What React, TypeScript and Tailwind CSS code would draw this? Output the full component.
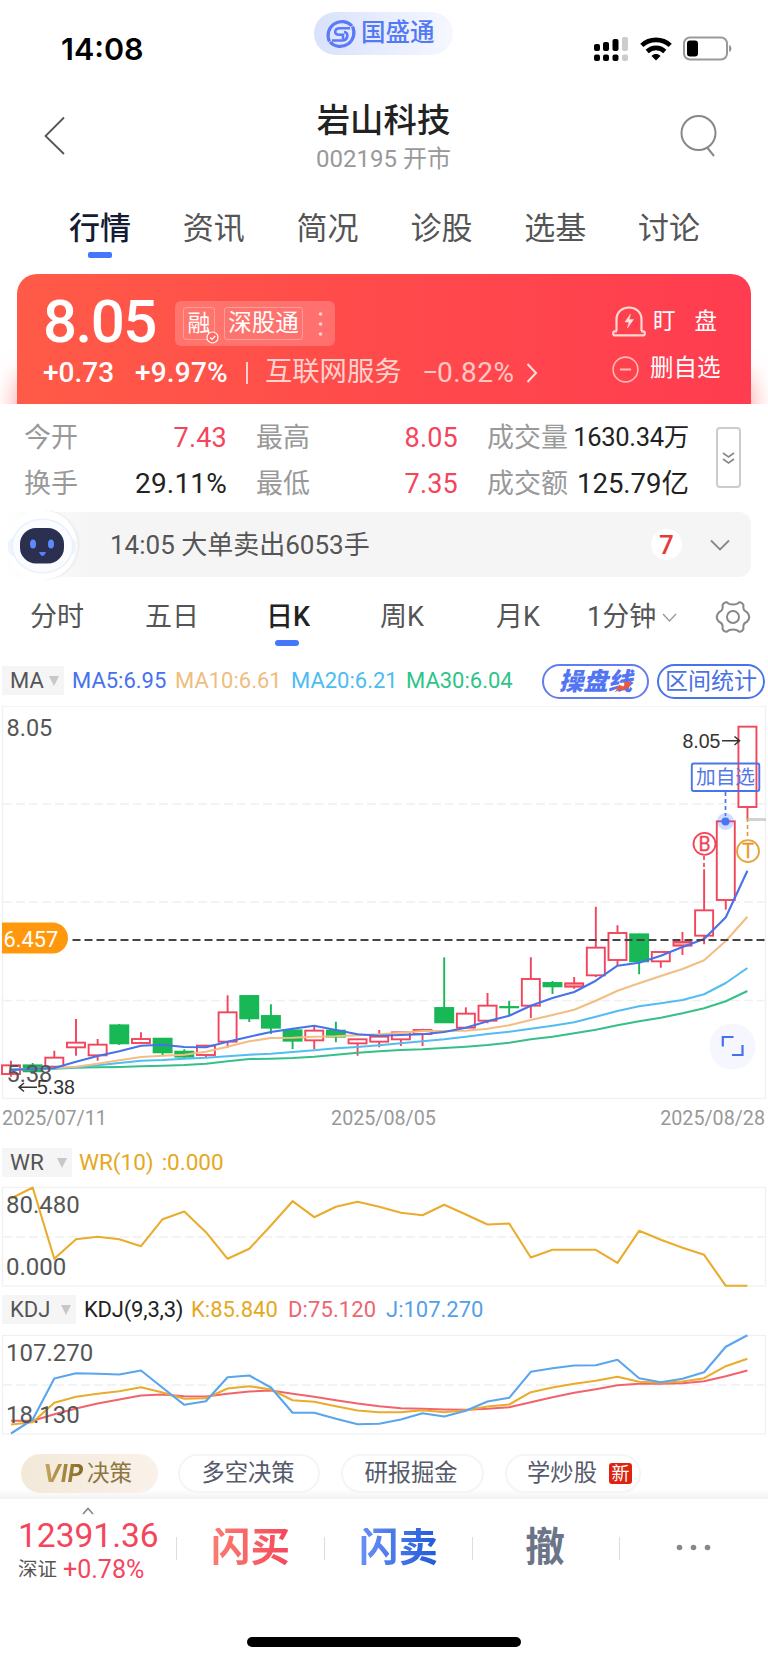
import type { ReactNode } from 'react';

const STEP = 21.66;
const cx = (i: number) => 11 + STEP * i;

// series are kept at 3x of the drawn height: [high, top, bottom, low, up]
const candles: [number, number, number, number, number][] = [
  [1082, 1096, 1122, 1130, 1],
  [1089, 1096, 1114, 1116, 0],
  [1052, 1073, 1100, 1108, 1],
  [957, 1028, 1042, 1067, 1],
  [1017, 1034, 1066, 1082, 1],
  [972, 976, 1030, 1035, 0],
  [997, 1017, 1029, 1029, 1],
  [1014, 1016, 1057, 1066, 0],
  [1048, 1055, 1070, 1077, 0],
  [1035, 1037, 1065, 1074, 1],
  [886, 937, 1025, 1043, 1],
  [885, 888, 955, 966, 0],
  [913, 948, 983, 1002, 0],
  [984, 991, 1022, 1047, 0],
  [980, 992, 1021, 1047, 1],
  [965, 992, 1010, 1027, 0],
  [1016, 1018, 1030, 1067, 1],
  [990, 1010, 1025, 1042, 1],
  [996, 997, 1018, 1038, 1],
  [986, 990, 1002, 1038, 1],
  [772, 924, 967, 967, 0],
  [922, 941, 983, 983, 1],
  [879, 917, 962, 970, 1],
  [902, 921, 922, 946, 0],
  [772, 837, 917, 954, 1],
  [843, 849, 859, 882, 0],
  [831, 850, 860, 866, 1],
  [620, 743, 826, 831, 1],
  [676, 699, 780, 797, 1],
  [701, 703, 784, 823, 0],
  [753, 756, 784, 803, 1],
  [696, 726, 737, 765, 1],
  [508, 631, 707, 733, 1],
  [364, 364, 600, 629, 1],
  [80, 80, 321, 358, 1],
];

const ma5 = [1110, 1107, 1104, 1085, 1068, 1054, 1037, 1034, 1041, 1042, 1025, 1010, 996, 986, 977, 990, 1003, 1007, 1005, 1003, 996, 983, 964, 947, 917, 894, 876, 842, 797, 788, 767, 741, 717, 652, 512];
const ma10 = [1109, 1107, 1104, 1100, 1091, 1081, 1071, 1067, 1064, 1055, 1040, 1024, 1014, 1013, 1010, 1009, 1006, 1003, 998, 993, 993, 992, 986, 976, 960, 945, 929, 902, 872, 850, 828, 807, 781, 723, 650];
const ma20 = [1108, 1107, 1105, 1102, 1096, 1089, 1082, 1080, 1076, 1073, 1069, 1064, 1061, 1056, 1051, 1045, 1041, 1036, 1030, 1024, 1018, 1010, 1002, 995, 986, 977, 967, 950, 933, 919, 910, 900, 883, 849, 804];
const ma30 = [1108, 1107, 1106, 1103, 1102, 1101, 1099, 1097, 1095, 1091, 1084, 1077, 1076, 1074, 1070, 1064, 1058, 1054, 1050, 1048, 1044, 1040, 1035, 1028, 1018, 1010, 1000, 989, 976, 964, 953, 940, 925, 904, 873];
const wr = [174, 141, 355, 296, 289, 296, 317, 236, 213, 275, 355, 325, 255, 182, 230, 199, 184, 199, 217, 224, 193, 222, 252, 249, 351, 328, 328, 328, 367, 271, 298, 322, 343, 436, 436];
const kLine = [853, 846, 788, 770, 761, 753, 741, 757, 776, 774, 745, 738, 748, 780, 785, 798, 811, 816, 816, 810, 816, 810, 799, 793, 756, 742, 731, 722, 710, 725, 728, 724, 714, 678, 656];
const dLine = [842, 842, 822, 805, 790, 778, 766, 763, 768, 769, 761, 754, 751, 761, 770, 780, 790, 798, 804, 806, 808, 809, 806, 801, 786, 771, 758, 747, 735, 731, 731, 729, 723, 708, 691];
const jLine = [880, 838, 715, 699, 701, 703, 691, 743, 794, 783, 711, 706, 742, 818, 818, 836, 852, 851, 838, 819, 829, 812, 784, 773, 695, 684, 676, 675, 659, 714, 726, 716, 696, 620, 585];

function Line({ data, color, base = 0 }: { data: number[]; color: string; base?: number }) {
  const points = data.map((v, i) => `${cx(i).toFixed(1)},${((v - base) / 3).toFixed(1)}`).join(' ');
  return <polyline points={points} fill="none" stroke={color} strokeWidth="2.1" strokeLinejoin="round" />;
}

function StatusBar() {
  return (
    <div className="flex h-[92px] items-start justify-between pl-[61px] pr-[36px]">
      <div className="mt-[34px] w-[253px] font-[Inter] text-[30.5px] leading-[30px] font-semibold">14:08</div>
      <div className="mt-3 flex h-[43px] w-[139px] items-center gap-[4px] rounded-full bg-linear-to-r from-[#d9e2fc] to-[#f6f8ff] pl-[11px]">
        <svg width="32" height="32" viewBox="0 0 32 32" fill="none" stroke="#5b7af5">
          <path d="M27 8A13.800 13.800 0 0 0 4.500 23.500" strokeWidth="3.200" />
          <path d="M5 24A13.800 13.800 0 0 0 27.500 8.500" strokeWidth="3.200" />
          <path d="M25 10.300H15C9 10.300 8.500 16.800 14 16.800H18V21" strokeWidth="2.600" />
          <path d="M7 22.500H17C23.500 22.500 24 14 19 14" strokeWidth="2.600" />
        </svg>
        <span className="text-[24.500px] leading-none font-medium text-[#5479f5]">国盛通</span>
      </div>
      <div className="mt-[36px] flex w-[279px] items-center justify-end gap-[11px]">
        <svg width="35" height="25" viewBox="0 0 35 25">
          <rect x="0" y="8" width="6" height="7" rx="2" />
          <rect x="9" y="6" width="6" height="9" rx="2" />
          <rect x="18.500" y="3" width="6" height="12" rx="2" />
          <rect x="28" y="1" width="6" height="14" rx="2" fill="#ccc" />
          <rect x="0" y="18.500" width="6" height="6.500" rx="2" />
          <rect x="9" y="18.500" width="6" height="6.500" rx="2" />
          <rect x="18.500" y="18.500" width="6" height="6.500" rx="2" />
          <rect x="28" y="18.500" width="6" height="6.500" rx="2" fill="#ccc" />
        </svg>
        <svg width="32" height="24" viewBox="0 0 32 24" fill="none" stroke="#000" strokeWidth="4.600">
          <path d="M1.800 8.300C9.500 1 22.500 1 30.200 8.300" />
          <path d="M7.200 14.500C12.200 9.700 19.800 9.700 24.800 14.500" />
          <path d="M11.500 19C14.200 16.400 17.800 16.400 20.500 19L16 23.500Z" fill="#000" stroke="none" />
        </svg>
        <svg width="49" height="25" viewBox="0 0 49 25">
          <rect x="1" y="1.500" width="43" height="22" rx="6" fill="none" stroke="#999" strokeWidth="2" />
          <rect x="4" y="4.500" width="11" height="16" rx="3" />
          <path d="M46.200 9C49 10 49 15 46.200 16Z" fill="#888" />
        </svg>
      </div>
    </div>
  );
}

function Header() {
  return (
    <div className="flex h-[96px] justify-between pl-[44px] pr-[50px]">
      <svg className="mt-[24px]" width="22" height="40" viewBox="0 0 22 40" fill="none" stroke="#555" strokeWidth="1.800">
        <path d="M20 1.500L1.500 20L20 38" />
      </svg>
      <div className="ml-[21px] flex w-[200px] flex-col items-center">
        <h1 className="mt-[12px] text-[33.4px] leading-[34px] font-medium text-[#222]">岩山科技</h1>
        <p className="mt-[9px] text-[24px] leading-[24px] text-[#999]">002195 开市</p>
      </div>
      <svg className="mt-[22px]" width="38" height="44" viewBox="0 0 38 44" fill="none" stroke="#888" strokeWidth="2">
        <circle cx="18.500" cy="19" r="17" />
        <path d="M27.500 34L34 42" />
      </svg>
    </div>
  );
}

function MainTabs() {
  return (
    <div className="grid h-[86px] grid-cols-6 pl-[43px] pr-[42px] text-[31px] leading-[34px] text-[#555]">
      {['行情', '资讯', '简况', '诊股', '选基', '讨论'].map((t, i) => (
        <div key={t} className={i === 0 ? 'flex flex-col items-center pt-[24px] font-medium text-[#141c33]' : 'flex flex-col items-center pt-[24px]'}>
          <span>{t}</span>
          {i === 0 && <i className="mt-[6px] h-[6px] w-6 rounded-[2px] bg-[#4477fb]" />}
        </div>
      ))}
    </div>
  );
}

function PriceCard() {
  return (
    <div className="h-[130px] overflow-hidden px-[17px]">
      <div className="flex h-full justify-between rounded-t-[20px] bg-linear-to-r from-[#ff5a47] via-[#ff4a4b] to-[#ff3c50] pl-[26px] pr-[30px] text-white shadow-[0_100px_26px_rgba(255,80,80,0.6)]">
        <div>
          <div className="flex h-[78px] pt-[17px]">
            <span className="mt-[1px] w-[132px] text-[60px] leading-[60px] font-medium tracking-[-1.500px]">8.05</span>
            <div className="mt-[10px] flex h-[45px] w-[160px] items-center rounded-md bg-white/20 pl-[8px]">
              <span className="relative flex h-[33px] w-[32px] items-center justify-center rounded-[3px] border border-white/30 text-[23px] leading-none">
                融
                <svg className="absolute -right-[5px] -bottom-[5px]" width="13" height="13" viewBox="0 0 13 13" fill="#ff6a5f" stroke="#fff" strokeWidth="1.200">
                  <circle cx="6.500" cy="6.500" r="5.500" />
                  <path d="M4 6.500L6 8.500L9.200 5" fill="none" />
                </svg>
              </span>
              <span className="ml-[9px] flex h-[33px] w-[79px] items-center justify-center rounded-[3px] border border-white/30 text-[23.500px] leading-none">深股通</span>
              <svg className="ml-[15px]" width="5" height="36" viewBox="0 0 5 36" fill="#fff" opacity="0.7">
                <circle cx="2.500" cy="8" r="1.800" />
                <circle cx="2.500" cy="18" r="1.800" />
                <circle cx="2.500" cy="28" r="1.800" />
              </svg>
            </div>
          </div>
          <div className="mt-[7px] flex h-[28px] items-center text-[28px] leading-none">
            <span className="w-[92px] font-medium">+0.73</span>
            <span className="w-[111px] font-medium tracking-[0.2px]">+9.97%</span>
            <i className="mr-[17px] h-[22px] w-[2px] bg-white/70" />
            <span className="w-[157px] text-[27.3px] text-[#ffd2cd]">互联网服务</span>
            <span className="flex w-[104px] tracking-[0.5px] text-[#ffc8c4]"><span className="w-[15px]">−</span>0.82%</span>
            <svg width="12" height="22" viewBox="0 0 12 22" fill="none" stroke="#ffe0dd" strokeWidth="2">
              <path d="M1.500 2L10 11L1.500 20" />
            </svg>
          </div>
        </div>
        <div className="w-[109px] pt-[32px]">
          <div className="flex h-[31px] items-center">
            <svg width="34" height="31" viewBox="0 0 34 31" fill="none" stroke="#ffd8d4" strokeWidth="2.200">
              <path d="M4.500 25V13.500C4.500 -2.500 29.500 -2.500 29.500 13.500V25" />
              <path d="M5 25.300H2.500Q1.200 25.300 1.200 27.300T2.500 29.300H31.500Q32.800 29.300 32.800 27.300T31.500 25.300H29" />
              <path d="M18.500 8L13 16H17L15.500 22L21.500 13.500H17.200Z" fill="#ffe3e0" strokeWidth="0.500" />
            </svg>
            <span className="ml-[7px] flex w-[64px] justify-between text-[22.500px] leading-none"><b className="font-normal">盯</b><b className="font-normal">盘</b></span>
          </div>
          <div className="mt-[18px] flex h-[28px] items-center">
            <svg width="27" height="27" viewBox="0 0 27 27" fill="none" stroke="#ffbab8" strokeWidth="1.600">
              <circle cx="13.500" cy="13.500" r="12.400" />
              <path d="M8 13.500H19" strokeWidth="2" />
            </svg>
            <span className="ml-[11px] text-[23.5px] leading-none whitespace-nowrap">删自选</span>
          </div>
        </div>
      </div>
    </div>
  );
}

function Stats() {
  return (
    <div className="flex h-[108px] pl-[24px]">
      <div className="grid h-[104px] w-[665px] grid-cols-[54px_149px_29px_54px_148px_29px_202px] grid-rows-[46px_46px] items-center pt-[11px] text-[27px] leading-none text-[#222]">
        <span className="text-[#999]">今开</span>
        <span className="text-right tracking-[0.2px] text-[#f5455c]">7.43</span>
        <i />
        <span className="text-[#999]">最高</span>
        <span className="text-right tracking-[0.2px] text-[#f5455c]">8.05</span>
        <i />
        <div className="flex items-center justify-between whitespace-nowrap">
          <span className="text-[#999]">成交量</span>
          <span className="text-[25.500px] tracking-[-0.3px]">1630.34万</span>
        </div>
        <span className="text-[#999]">换手</span>
        <span className="text-right text-[28px] tracking-[0.2px]">29.11%</span>
        <i />
        <span className="text-[#999]">最低</span>
        <span className="text-right tracking-[0.2px] text-[#f5455c]">7.35</span>
        <i />
        <div className="flex items-center justify-between whitespace-nowrap">
          <span className="text-[#999]">成交额</span>
          <span className="text-[27.500px]">125.79亿</span>
        </div>
      </div>
      <div className="mt-[23px] ml-[27px] flex h-[61px] w-[25px] items-center justify-center rounded-[4px] border-2 border-[#ccc]">
        <svg width="13" height="14" viewBox="0 0 13 14" fill="none" stroke="#888" strokeWidth="1.600">
          <path d="M1 2L6.500 6L12 2" />
          <path d="M1 8L6.500 12L12 8" />
        </svg>
      </div>
    </div>
  );
}

function Notice() {
  return (
    <div className="mr-[17px] flex h-[65px] items-center rounded-r-xl bg-linear-to-r from-white to-[#f5f5f5] to-12% pl-[5px] text-[26px] leading-none text-[#555]">
      <svg width="76" height="70" viewBox="0 0 76 70" className="-my-1">
        <circle cx="40" cy="35" r="35" fill="#f0f0f2" />
        <circle cx="37" cy="35" r="35" fill="#fff" />
        <rect x="3" y="27" width="68" height="19" rx="7" fill="#eef4fe" />
        <ellipse cx="37.500" cy="36" rx="31" ry="27.500" fill="#e9f1fe" />
        <ellipse cx="37.500" cy="36" rx="29.500" ry="26" fill="#fafcff" />
        <rect x="15" y="18" width="44" height="35.500" rx="16" fill="#2b3050" />
        <ellipse cx="28" cy="34" rx="3" ry="4.500" fill="#5b8bff" />
        <ellipse cx="46" cy="34" rx="3" ry="4.500" fill="#5b8bff" />
        <path d="M34 42H41Q37.500 50 34 42Z" fill="#5b7df5" />
      </svg>
      <span className="ml-[29px]">14:05 大单卖出6053手</span>
      <span className="ml-auto flex h-[31px] w-[31px] items-center justify-center rounded-full bg-white font-medium text-[#e83a3a]">7</span>
      <svg className="mr-[21px] ml-[28px]" width="20" height="12" viewBox="0 0 20 12" fill="none" stroke="#888" strokeWidth="1.800">
        <path d="M1 1.500L10 10.500L19 1.500" />
      </svg>
    </div>
  );
}

function PeriodTabs() {
  return (
    <div className="flex h-[89px] items-start pt-[25px] pl-[30px] text-[27px] leading-[30px] text-[#555]">
      <span className="w-[115px]">分时</span>
      <span className="w-[121px]">五日</span>
      <span className="flex w-[114px] flex-col font-medium text-[#222]">
        日K
        <i className="mt-[8px] ml-[9px] h-[6px] w-6 rounded-full bg-[#4477fb]" />
      </span>
      <span className="w-[116px]">周K</span>
      <span className="w-[91px]">月K</span>
      <span className="w-[75px] whitespace-nowrap">1分钟</span>
      <svg className="mt-[11px]" width="15" height="10" viewBox="0 0 15 10" fill="none" stroke="#999" strokeWidth="1.400">
        <path d="M1 1L7.500 8L14 1" />
      </svg>
      <svg className="-mt-[2px] ml-[38px]" width="36" height="34" viewBox="0 0 36 34" fill="none" stroke="#888" strokeWidth="2">
        <path d="M12 2.300Q13.500 4.600 18 4.600T24 2.300Q27 2 28.500 5.200Q27.500 10.500 32 12.200Q36.500 17 32 21.800Q27.500 23.500 28.500 28.800Q27 32 24 31.700Q22.500 29.400 18 29.400T12 31.700Q9 32 7.500 28.800Q8.500 23.500 4 21.800Q-0.500 17 4 12.200Q8.500 10.500 7.500 5.200Q9 2 12 2.300Z" strokeLinejoin="round" />
        <circle cx="18" cy="17" r="6" />
      </svg>
    </div>
  );
}

function Chip({ children, className }: { children: ReactNode; className: string }) {
  return (
    <div className={`flex h-[29px] items-center justify-between bg-[#f5f5f6] pr-[5px] pl-[8px] text-[#555] ${className}`}>
      <span>{children}</span>
      <svg width="10" height="10" viewBox="0 0 11 11" fill="#c8c8c8"><path d="M0 0H11L5.500 11Z" /></svg>
    </div>
  );
}

function MaRow() {
  return (
    <div className="flex h-[40px] items-start pl-[2px] text-[22px] leading-none">
      <Chip className="w-[62px]">MA</Chip>
      <div className="flex h-[29px] items-center pl-[8px]">
        <span className="w-[103px] text-[#4671ee]">MA5:6.95</span>
        <span className="w-[116px] text-[#efbd7f]">MA10:6.61</span>
        <span className="w-[115px] text-[#4dbcf0]">MA20:6.21</span>
        <span className="w-[136px] text-[#2ec489]">MA30:6.04</span>
      </div>
      <div className="-mt-[2px] flex h-[35px] w-[107px] items-center justify-center rounded-full border-2 border-[#637cf2]">
        <span className="relative text-[24.500px] leading-[30px] font-black text-[#5275f4] italic">
          操盘线
          <svg className="absolute right-0 bottom-[4px]" width="18" height="12" viewBox="0 0 19 14" fill="#f4533c">
            <path d="M0 13L5 4.500L10 6.500L12 3.500L9.500 2L19 0L16 9.500L14.500 6.500L11 11.500L6.500 9.500Z" />
          </svg>
        </span>
      </div>
      <div className="-mt-[2px] ml-[8px] flex h-[35px] w-[108px] items-center justify-center rounded-full border-2 border-[#4873ea] text-[23px] whitespace-nowrap text-[#4a70e6]">区间统计</div>
    </div>
  );
}

function KChart() {
  return (
    <svg className="block" width="768" height="394" viewBox="0 6 768 394" fontFamily="Roboto, 'Noto Sans CJK SC', sans-serif">
      <rect x="2.500" y="6" width="763" height="392.500" fill="none" stroke="#f0f1f4" strokeWidth="1.500" />
      {[104, 202, 300.5].map((y) => (
        <path key={y} d={`M3 ${y}H765`} stroke="#f0f0f0" strokeWidth="1.300" strokeDasharray="9 4" />
      ))}
      {candles.map(([h, t, b, l, up], i) => (
        <g key={i} stroke={up ? '#f2455b' : '#17b855'} strokeWidth="1.900">
          <path d={`M${cx(i)} ${h / 3}V${t / 3}M${cx(i)} ${b / 3}V${l / 3}`} />
          <rect x={cx(i) - 9} y={t / 3} width="18" height={(b - t) / 3} fill={up ? (b - t < 12 ? '#f9a0a8' : '#fff') : '#17b855'} />
        </g>
      ))}
      <Line data={ma30} color="#35c08a" />
      <Line data={ma20} color="#52bdf0" />
      <Line data={ma10} color="#f3be83" />
      <Line data={ma5} color="#4672ea" />
      <path d="M72.500 240H766" stroke="#444" strokeWidth="2.200" strokeDasharray="8 4" />
      <path d="M2 222.500H52.500A15.500 15.500 0 0 1 52.500 253.500H2Z" fill="#ff980c" />
      <text x="3.500" y="247" fontSize="21.800" fill="#fff">6.457</text>
      <g fill="#555" fontSize="23.500">
        <text x="6.500" y="36">8.05</text>
        <text x="6.500" y="382">5.38</text>
      </g>
      <g fill="#333" fontSize="19.500" fontFamily="'Liberation Sans', sans-serif">
        <text x="37" y="394">5.38</text>
        <text x="682.500" y="48">8.05</text>
      </g>
      <g fill="none" stroke="#333" strokeWidth="1.500">
        <path d="M37 387.300H19M24 383L19 387.300L24 391.500" />
        <path d="M722 40.700H739M734.500 36.500L739.500 40.700L734.500 45" />
      </g>
      <rect x="691.800" y="63.500" width="67.500" height="27.500" rx="2" fill="none" stroke="#4876e8" strokeWidth="1.900" />
      <text x="696" y="84" fontSize="19.700" fill="#5279e4">加自选</text>
      <path d="M725.500 92V116" stroke="#4876e8" strokeWidth="1.700" strokeDasharray="4 3" />
      <circle cx="725.500" cy="121.500" r="8.500" fill="#4477fb" fillOpacity="0.25" />
      <circle cx="725.500" cy="121.500" r="4" fill="#4477fb" />
      <path d="M747.500 119.500H766" stroke="#d2d2d2" strokeWidth="3" />
      <path d="M747.500 118V138" stroke="#d99a38" strokeWidth="1.600" strokeDasharray="4 3" />
      <path d="M704 156V168" stroke="#f2455b" strokeWidth="1.700" strokeDasharray="4 3" />
      <g strokeWidth="1.800" fontSize="19.500" textAnchor="middle">
        <circle cx="704.500" cy="143.800" r="11" fill="#fff" stroke="#f2455b" />
        <text x="704.700" y="150.800" fill="#f2455b" stroke="#f2455b" strokeWidth="0.300">B</text>
        <circle cx="748" cy="151.200" r="11" fill="#fff" stroke="#e8a33a" />
        <text x="748" y="158.200" fill="#e8982a" stroke="#e8982a" strokeWidth="0.300">T</text>
      </g>
      <circle cx="732.500" cy="346.500" r="23" fill="#f5f6fe" />
      <path d="M722.800 346.500V337H733.500M732 355H742.500V345" fill="none" stroke="#4671ee" strokeWidth="2.200" />
    </svg>
  );
}

// shared frame of the WR and KDJ panels
function Panel({ max, min, children }: { max: string; min: string; children: ReactNode }) {
  return (
    <svg className="block" width="768" height="100" viewBox="0 -0.500 768 100" overflow="visible" fontFamily="Roboto, sans-serif">
      <rect x="2.500" y="0" width="763" height="98.500" fill="none" stroke="#eff1f3" strokeWidth="1.300" />
      <path d="M3 49.500H765" stroke="#f0f0f0" strokeWidth="1.300" strokeDasharray="9 4" />
      {children}
      <g fill="#555" fontSize="24">
        <text x="6" y="25">{max}</text>
        <text x="6" y="87.500">{min}</text>
      </g>
    </svg>
  );
}

function Pills() {
  const pill = 'flex h-[39px] items-center justify-center rounded-full border-2 border-[#f5f5f6] bg-white';
  return (
    <div className="flex h-[64px] items-start bg-linear-to-b from-white from-85% to-[#f2f2f2] pt-[19px] pl-[21px] text-[23.3px] leading-none text-[#555a6b]">
      <div className="flex h-[39px] w-[137px] items-center justify-center gap-[2px] rounded-full bg-linear-to-r from-[#f3e9d9] to-[#faf1ea] pr-[4px] text-[#8d7640]">
        <b className="bg-linear-to-r from-[#c9a85f] to-[#846621] bg-clip-text pr-[2px] font-[Inter] text-[24px] text-transparent italic">VIP</b>
        <span className="text-[22.500px]">决策</span>
      </div>
      <div className={`${pill} ml-[20px] w-[142px] pr-[2px]`}>多空决策</div>
      <div className={`${pill} ml-[21px] w-[143px] pr-[3px]`}>研报掘金</div>
      <div className={`${pill} ml-[21px] w-[136px] gap-[12px] pl-[13px]`}>
        <span className="whitespace-nowrap">学炒股</span>
        <span className="flex h-[21px] w-[23px] items-center justify-center rounded-[3px] bg-[#dc2410] text-[18px] text-white">新</span>
      </div>
    </div>
  );
}

function BottomBar() {
  const divider = <i className="mt-[38px] h-[23px] w-px bg-[#ddd]" />;
  return (
    <div className="flex h-[138px] bg-white pl-[18px]">
      <div className="w-[158px]">
        <svg className="mt-[8px] ml-[64px] block" width="12" height="8" viewBox="0 0 12 8" fill="none" stroke="#888" strokeWidth="1.700">
          <path d="M1 7L6 1.500L11 7" />
        </svg>
        <p className="mt-[4px] text-[33.5px] leading-[33px] text-[#f5455c]">12391.36</p>
        <p className="mt-[5px] flex items-center gap-[6px] text-[19.500px] leading-[25px] text-[#555]">深证<span className="text-[25px] text-[#f5455c]">+0.78%</span></p>
      </div>
      {divider}
      <div className="flex w-[147px] justify-center pt-[29px] text-[39.500px] leading-[40px] font-bold">
        <span className="bg-linear-to-r from-[#fb7c70] to-[#f5455c] bg-clip-text text-transparent">闪买</span>
      </div>
      {divider}
      <div className="flex w-[147px] justify-center pt-[29px] text-[39.500px] leading-[40px] font-bold">
        <span className="bg-linear-to-r from-[#6a90f5] to-[#1f59da] bg-clip-text text-transparent">闪卖</span>
      </div>
      {divider}
      <div className="flex w-[146px] justify-center pt-[29px] pr-[2px] text-[39.500px] leading-[40px] font-bold text-[#6b7488]">撤</div>
      {divider}
      <svg className="mt-[45px] ml-[56px]" width="36" height="7" viewBox="0 0 36 7" fill="#888">
        <circle cx="3.500" cy="3.500" r="2.800" />
        <circle cx="17.500" cy="3.500" r="2.800" />
        <circle cx="31.500" cy="3.500" r="2.800" />
      </svg>
    </div>
  );
}

export default function App() {
  return (
    <main className="h-[1663px] w-[768px] overflow-hidden bg-white font-[Roboto,'Noto_Sans_CJK_SC',sans-serif]">
      <StatusBar />
      <Header />
      <MainTabs />
      <PriceCard />
      <Stats />
      <Notice />
      <PeriodTabs />
      <MaRow />
      <KChart />
      <div className="flex h-[48px] items-start justify-between pt-[8px] pr-[3px] pl-[2px] text-[19.700px] leading-[22px] text-[#999]">
        <span>2025/07/11</span>
        <span>2025/08/05</span>
        <span>2025/08/28</span>
      </div>
      <div className="flex h-[39px] items-start pl-[2px] text-[22.500px] leading-none">
        <Chip className="w-[70px]">WR</Chip>
        <div className="flex h-[29px] items-center gap-[8px] pl-[7px] text-[#e5a823]">
          <span>WR(10)</span>
          <span>:0.000</span>
        </div>
      </div>
      <Panel max="80.480" min="0.000">
        <Line data={wr} color="#eaac2c" base={141} />
      </Panel>
      <div className="mt-[8px] flex h-[40px] items-start pl-[2px] text-[22px] leading-none">
        <Chip className="w-[74px]">KDJ</Chip>
        <div className="flex h-[29px] items-center pl-[8px] whitespace-nowrap">
          <span className="w-[107px] tracking-[-0.2px] text-[#222]">KDJ(9,3,3)</span>
          <span className="w-[97px] text-[#e5a823]">K:85.840</span>
          <span className="w-[98px] tracking-[0.1px] text-[#f06470]">D:75.120</span>
          <span className="text-[#559fe8]">J:107.270</span>
        </div>
      </div>
      <Panel max="107.270" min="18.130">
        <Line data={dLine} color="#f2636e" base={586} />
        <Line data={kLine} color="#eaac2c" base={586} />
        <Line data={jLine} color="#5aa5ee" base={586} />
      </Panel>
      <Pills />
      <BottomBar />
      <div className="mx-auto h-[10px] w-[274px] rounded-full bg-black" />
    </main>
  );
}
